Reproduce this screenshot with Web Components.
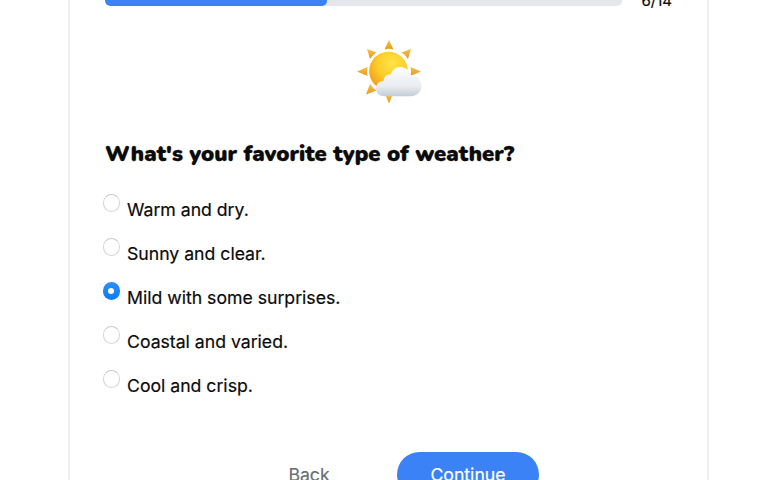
<!DOCTYPE html>
<html lang="en">
<head>
<meta charset="utf-8">
<title>Weather quiz</title>
<style>
  html, body {
    margin: 0;
    height: 480px;
    overflow: hidden;
    background: #fff;
    color: #0b0b0b;
    font-family: Inter, "Liberation Sans", sans-serif;
  }
</style>
</head>
<body>
<quiz-card>
  <quiz-progress slot="progress" value="6" max="14"></quiz-progress>
  <weather-icon slot="icon"></weather-icon>
  <span slot="title">What's your favorite type of weather?</span>
  <quiz-option>Warm and dry.</quiz-option>
  <quiz-option>Sunny and clear.</quiz-option>
  <quiz-option checked>Mild with some surprises.</quiz-option>
  <quiz-option>Coastal and varied.</quiz-option>
  <quiz-option>Cool and crisp.</quiz-option>
  <quiz-button slot="actions">Back</quiz-button>
  <quiz-button slot="actions" primary>Continue</quiz-button>
</quiz-card>

<script>
class QuizCard extends HTMLElement {
  constructor() {
    super()
    this.attachShadow({ mode: 'open' })
    this.shadowRoot.innerHTML = `
      <style>
        :host {
          display: block;
          box-sizing: border-box;
          width: 641px;
          height: 520px;
          margin: -40px 0 0 68px;
          padding: 33.500px 35px 0;
          border: 2px solid #efefef;
          border-bottom: 0;
          background: #fff;
        }
        .icon {
          display: flex;
          justify-content: center;
          height: 64px;
          margin-top: 34px;
          padding-left: 2px;
        }
        h2 {
          height: 32px;
          margin: 34.500px 0 0;
          font: 900 22px/32px Nunito, Lato, sans-serif;
          letter-spacing: .03px;
          white-space: nowrap;
          -webkit-text-stroke: .3px #0b0b0b;
        }
        .options {
          display: grid;
          grid-auto-rows: 44px;
          margin: 24px 0 0 -2.500px;
        }
        .actions {
          display: flex;
          gap: 23px;
          justify-content: center;
          margin-top: 37.500px;
          padding-left: 6px;
        }
      </style>
      <slot name="progress"></slot>
      <div class="icon"><slot name="icon"></slot></div>
      <h2><slot name="title"></slot></h2>
      <div class="options"><slot></slot></div>
      <div class="actions"><slot name="actions"></slot></div>
    `
  }
}

class QuizProgress extends HTMLElement {
  constructor() {
    super()
    this.attachShadow({ mode: 'open' })
  }

  connectedCallback() {
    const value = this.getAttribute('value')
    const max = this.getAttribute('max')

    this.shadowRoot.innerHTML = `
      <style>
        :host {
          display: flex;
          align-items: center;
          justify-content: space-between;
          height: 10px;
        }
        .track {
          width: 517px;
          height: 10px;
          border-radius: 5px;
          overflow: hidden;
          background: #e5e7eb;
        }
        .bar {
          width: ${value / max * 100}%;
          height: 100%;
          border-radius: 5px;
          background: #3b82f6;
        }
        .count {
          font-size: 15px;
          line-height: 20px;
          -webkit-text-stroke: .2px;
        }
      </style>
      <div class="track"><div class="bar"></div></div>
      <span class="count">${value}/${max}</span>
    `
  }
}

class WeatherIcon extends HTMLElement {
  constructor() {
    super()
    this.attachShadow({ mode: 'open' })
    this.shadowRoot.innerHTML = `
      <style>
        :host { display: block; }
        svg { display: block; }
      </style>
      <svg width="66" height="64" viewBox="0 0 66 64">
        <defs>
          <radialGradient id="sun" cx=".6" cy=".3" r=".75">
            <stop offset="0" stop-color="#ffe347"/>
            <stop offset=".5" stop-color="#fdce2b"/>
            <stop offset="1" stop-color="#f29a15"/>
          </radialGradient>
          <linearGradient id="ray" x2="0" y2="1">
            <stop offset="0" stop-color="#f8c040"/>
            <stop offset="1" stop-color="#e59a22"/>
          </linearGradient>
          <linearGradient id="cloud" x2="0" y2="1">
            <stop offset="0" stop-color="#fafbfc"/>
            <stop offset=".65" stop-color="#eaedf1"/>
            <stop offset="1" stop-color="#c5ccd5"/>
          </linearGradient>
          <linearGradient id="puff" x2="0" y2="1">
            <stop offset="0" stop-color="#fff"/>
            <stop offset="1" stop-color="#eceff3" stop-opacity="0"/>
          </linearGradient>
        </defs>
        <g fill="url(#ray)">
          <path d="M32 0l4.500 9.500q-4.500-1.500-9 0z"/>
          <path d="M54 9l-3 10q-2-4.100-6.500-6.500z"/>
          <path d="M10 9l9.500 3.500q-4 2.500-6.500 6.500z"/>
          <path d="M0 31.500l10.500-4.500q-1 4.500 0 9z"/>
          <path d="M64 31.500l-10.500-4.500q1 4.500 0 9z"/>
          <path d="M9 54.500l4-10.500q2.500 4 6.500 6.500z"/>
          <path d="M32 63.500l-4-9.500q4 1.500 8 0z"/>
        </g>
        <circle cx="31.500" cy="31" r="19.300" fill="url(#sun)"/>
        <path d="M27.500 56.200c-5 0-8.500-3-8.500-7.500 0-4.600 3.300-7.500 7.500-7.600.2-4.500 3.200-7.100 7.300-6.600 1.500-4.700 5.200-7.500 10-7.400 5.300.1 8.900 3.500 9.300 7.900 6.700-.2 11.300 4.600 11.300 10.700s-4.500 10.500-11 10.500z" fill="url(#cloud)"/>
        <path d="M27.500 41.500c.8-4.500 3.500-6.500 6.800-5.900 1.500-4.600 4.700-7.100 8.900-7 4.500.1 7.400 3 7.600 7.300-3.300-.8-6.300.6-7.700 3.300-4-.9-7 1-8 4.100-3-2-5.500-2.500-7.600-1.800z" fill="url(#puff)"/>
      </svg>
    `
  }
}

class QuizOption extends HTMLElement {
  constructor() {
    super()
    this.attachShadow({ mode: 'open' })
    this.shadowRoot.innerHTML = `
      <style>
        :host {
          display: flex;
          gap: 7px;
          align-items: flex-start;
          height: 44px;
          font-size: 17.650px;
          line-height: 28px;
          white-space: nowrap;
          -webkit-text-stroke: .2px;
        }
        .radio {
          display: grid;
          place-items: center;
          box-sizing: border-box;
          width: 17.500px;
          height: 17.500px;
          border: 1px solid #d6d6d6;
          border-top-color: #c8c8c8;
          border-radius: 50%;
          background: #fff;
        }
        :host([checked]) .radio {
          border: 0;
          background: linear-gradient(#2b91fb, #0a79fb);
        }
        :host([checked]) .radio::after {
          content: "";
          width: 6px;
          height: 6px;
          border-radius: 50%;
          background: #fff;
        }
        .label { padding-top: 1.500px; }
      </style>
      <span class="radio"></span>
      <span class="label"><slot></slot></span>
    `
  }

  connectedCallback() {
    this.setAttribute('role', 'radio')
    this.setAttribute('aria-checked', this.hasAttribute('checked'))
  }
}

class QuizButton extends HTMLElement {
  constructor() {
    super()
    this.attachShadow({ mode: 'open' })
    this.shadowRoot.innerHTML = `
      <style>
        button {
          width: 130px;
          height: 45px;
          padding: 0;
          border: none;
          border-radius: 23px;
          font: 17.650px/45px Inter, "Liberation Sans", sans-serif;
          color: #6b7075;
          background: none;
          -webkit-text-stroke: .2px;
        }
        :host([primary]) button {
          width: 142px;
          color: #fff;
          background: #3b82f6;
        }
      </style>
      <button type="button"><slot></slot></button>
    `
  }
}

customElements.define('quiz-card', QuizCard)
customElements.define('quiz-progress', QuizProgress)
customElements.define('weather-icon', WeatherIcon)
customElements.define('quiz-option', QuizOption)
customElements.define('quiz-button', QuizButton)
</script>
</body>
</html>
